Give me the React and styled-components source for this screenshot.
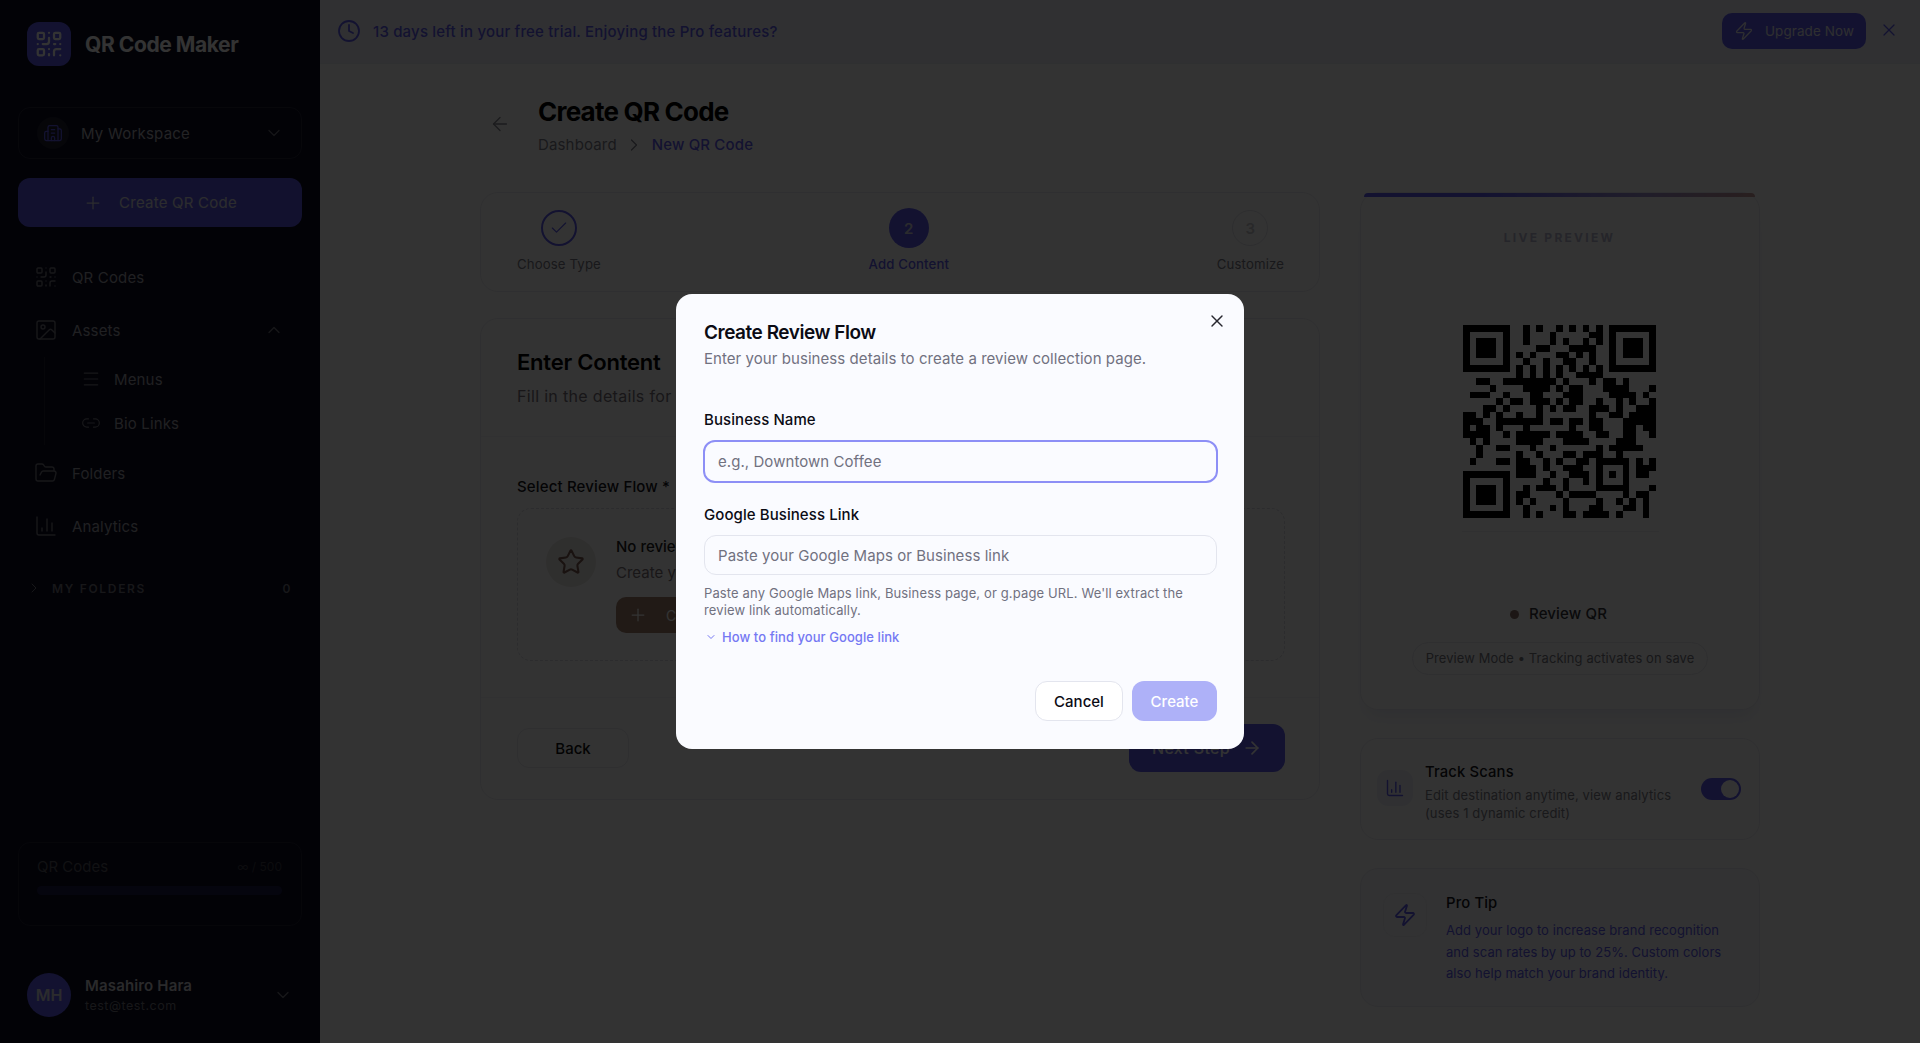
import React from "react";
import styled, { createGlobalStyle } from "styled-components";
import {
  ArrowLeft, ArrowRight, Building2, ChartColumn, Check, ChevronDown, ChevronRight, ChevronUp,
  Clock, FolderOpen, Image, Link2, Menu, Plus, QrCode, Star, X, Zap,
} from "lucide-react";

const primary = "#5f5cf1";

const GlobalStyle = createGlobalStyle`
  * { box-sizing: border-box; }
  html, body { margin: 0; height: 100%; overflow: hidden; }
  body { font-family: Inter, "Noto Sans", sans-serif; background: #ffffff; color: #0b0b14; }
`;

const Page = styled.div`
  display: flex;
  height: 100vh;
`;

/* sidebar */
const Sidebar = styled.aside`
  width: 320px;
  flex-shrink: 0;
  height: 100%;
  background: #0b0b20;
  display: flex;
  flex-direction: column;
  color: #b0b0b8;
`;

const Brand = styled.div`
  display: flex;
  align-items: center;
  gap: 14px;
  padding: 22px 27px 0;
  margin-bottom: 41px;
`;

const LogoBox = styled.div`
  width: 44px;
  height: 44px;
  border-radius: 12px;
  background: ${primary};
  color: #fff;
  display: flex;
  align-items: center;
  justify-content: center;
`;

const BrandName = styled.div`
  font-size: 21px;
  font-weight: 700;
  letter-spacing: -0.02em;
  color: #fff;
`;

const SideBlock = styled.div`
  margin: 0 18px;
`;

const Workspace = styled(SideBlock)`
  height: 52px;
  border: 1px solid rgba(255, 255, 255, 0.1);
  border-radius: 12px;
  display: flex;
  align-items: center;
  padding: 0 17px 0 18px;
  font-size: 15px;
  letter-spacing: 0.015em;
  > svg { color: #6a6a74; }
`;

const WorkspaceIcon = styled.div`
  width: 32px;
  height: 32px;
  border-radius: 50%;
  background: rgba(255, 255, 255, 0.08);
  color: ${primary};
  display: flex;
  align-items: center;
  justify-content: center;
  margin-right: 12px;
`;

const Grow = styled.span`
  flex: 1;
`;

const CreateButton = styled(SideBlock)`
  height: 49px;
  margin-top: 19px;
  margin-bottom: 28px;
  border-radius: 12px;
  background: ${primary};
  color: #e8e8f0;
  display: flex;
  align-items: center;
  justify-content: center;
  gap: 16px;
  font-size: 15px;
  letter-spacing: 0.015em;
  opacity: 0.95;
`;

const NavList = styled.nav`
  display: flex;
  flex-direction: column;
  gap: 9px;
  padding: 0 18px;
`;

const NavItem = styled.div`
  height: 44px;
  display: flex;
  align-items: center;
  gap: 14px;
  padding: 0 18px 0 16px;
  font-size: 15px;
  letter-spacing: 0.01em;
  color: #a0a0aa;
  > svg { color: #74747e; }
`;

const SubGroup = styled.div`
  margin: -4px 0 -3px 26px;
  padding-left: 36px;
  border-left: 1px solid rgba(255, 255, 255, 0.08);
`;

const SubItem = styled.div`
  height: 44px;
  display: flex;
  align-items: center;
  gap: 13px;
  font-size: 15px;
  letter-spacing: 0.01em;
  color: #a0a0aa;
  > svg { color: #74747e; }
`;

const FolderHead = styled.div`
  display: flex;
  align-items: center;
  margin-top: 32px;
  padding: 0 28px 0 26px;
  font-size: 12px;
  font-weight: 600;
  letter-spacing: 0.14em;
  color: #72727c;
  gap: 10px;
`;

const UsageBox = styled(SideBlock)`
  margin-top: auto;
  height: 84px;
  border: 1px solid rgba(255, 255, 255, 0.08);
  border-radius: 12px;
  padding: 14px 19px 14px 18px;
`;

const UsageRow = styled.div`
  display: flex;
  justify-content: space-between;
  font-size: 15px;
  line-height: 20px;
  color: #55555f;
`;

const UsageLimit = styled.span`
  font-size: 12px;
  color: #3c3c46;
`;

const UsageBar = styled.div`
  height: 9px;
  border-radius: 5px;
  margin-top: 9px;
  background: rgba(95, 92, 241, 0.2);
`;

const UserRow = styled.div`
  display: flex;
  align-items: center;
  gap: 14px;
  padding: 0 27px 0 27px;
  margin: 47px 0 26px;
  > svg { color: #74747e; }
`;

const Avatar = styled.div`
  width: 44px;
  height: 44px;
  border-radius: 50%;
  background: ${primary};
  color: #d8d8e2;
  font-size: 16px;
  font-weight: 600;
  display: flex;
  align-items: center;
  justify-content: center;
`;

const UserName = styled.div`
  font-size: 15px;
  font-weight: 600;
  letter-spacing: 0.01em;
  line-height: 20px;
  color: #cfcfd6;
`;

const UserMail = styled.div`
  font-size: 12.5px;
  letter-spacing: 0.04em;
  line-height: 19px;
  color: #74747e;
`;

/* main */
const Main = styled.main`
  flex: 1;
  min-width: 0;
  display: flex;
  flex-direction: column;
`;

const TrialBar = styled.div`
  height: 64px;
  padding: 0 21px 0 17px;
  display: flex;
  align-items: flex-start;
  background: #eef0fb;
  border-bottom: 1px solid #eceef6;
`;

const TrialText = styled.div`
  height: 62px;
  display: flex;
  align-items: center;
  gap: 12px;
  font-size: 15px;
  letter-spacing: 0.012em;
  font-weight: 500;
  color: ${primary};
  flex: 1;
`;

const UpgradeButton = styled.div`
  margin: 13px 13px 0 0;
  height: 36px;
  width: 144px;
  border-radius: 10px;
  background: ${primary};
  color: #e8e8f0;
  display: flex;
  align-items: center;
  justify-content: center;
  gap: 11px;
  font-size: 13.4px;
  font-weight: 400;
  letter-spacing: 0.01em;
`;

const TrialClose = styled.div`
  margin-top: 20px;
  color: ${primary};
  display: flex;
`;

const Content = styled.div`
  width: 1280px;
  margin: 0 auto;
  padding-top: 28px;
`;

const Header = styled.header`
  display: flex;
  align-items: center;
  gap: 27px;
  height: 64px;
  padding-left: 9px;
  margin-bottom: 36px;
  color: #666;
  > svg { color: #8a8a94; }
`;

const PageTitle = styled.h1`
  margin: 2px 0 0;
  font-size: 26px;
  line-height: 36px;
  font-weight: 700;
  letter-spacing: -0.03em;
  color: #000;
`;

const Crumbs = styled.div`
  display: flex;
  align-items: center;
  gap: 7px;
  font-size: 15px;
  letter-spacing: 0.01em;
  line-height: 22px;
  margin-top: 4px;
  color: #7f7f8a;
`;

const CrumbActive = styled.span`
  color: ${primary};
  font-weight: 500;
  margin-left: 1px;
`;

const Columns = styled.div`
  display: grid;
  grid-template-columns: 840px 400px;
  gap: 40px;
`;

const Stack = styled.div`
  display: flex;
  flex-direction: column;
  gap: ${(p) => p.$gap}px;
`;

const Card = styled.section`
  border: 1px solid #ececf2;
  border-radius: 18px;
  background: #fff;
`;

const StepperCard = styled(Card)`
  height: 100px;
  padding: 15px 35px 0 36px;
  display: flex;
  justify-content: space-between;
`;

const Step = styled.div`
  display: flex;
  flex-direction: column;
  align-items: center;
  font-size: 13.2px;
  letter-spacing: 0.01em;
  color: ${(p) => (p.$active ? primary : "#7a7a85")};
  font-weight: ${(p) => (p.$active ? 500 : 400)};
`;

const StepCircle = styled.div`
  width: ${(p) => (p.$active ? 40 : 36)}px;
  height: ${(p) => (p.$active ? 40 : 36)}px;
  margin: ${(p) => (p.$active ? 0 : 2)}px 0 ${(p) => (p.$active ? 8 : 10)}px;
  border-radius: 50%;
  border: ${(p) => (p.$done ? `2px solid ${primary}` : p.$active ? "none" : "1px solid #e2e2ea")};
  background: ${(p) => (p.$active ? primary : "transparent")};
  color: ${(p) => (p.$active ? "#d8d8e2" : p.$done ? primary : "#c8c8ce")};
  display: flex;
  align-items: center;
  justify-content: center;
  font-size: 15px;
  font-weight: 600;
`;

const ContentCard = styled(Card)`
  height: 482px;
  padding: 26px 34px 0 36px;
`;

const SectionTitle = styled.h2`
  margin: 0;
  font-size: 22px;
  line-height: 34px;
  font-weight: 600;
  letter-spacing: -0.01em;
  color: #000;
`;

const SectionSub = styled.p`
  margin: 2px 0 0;
  font-size: 16px;
  letter-spacing: 0.02em;
  line-height: 30px;
  color: #77707a;
`;

const Rule = styled.div`
  height: 1px;
  margin: ${(p) => p.$margin};
  background: #f3f3f7;
`;

const FieldLabel = styled.div`
  font-size: 15px;
  letter-spacing: 0.01em;
  line-height: 22px;
  font-weight: 500;
  color: #15151c;
`;

const EmptyBox = styled.div`
  height: 153px;
  margin-top: 10px;
  border: 1px dashed #dcdce4;
  border-radius: 14px;
  padding: 25px 0 0 28px;
  display: flex;
  gap: 20px;
`;

const StarCircle = styled.div`
  width: 50px;
  height: 50px;
  border-radius: 50%;
  background: #ece8e5;
  color: #7c5c50;
  margin-top: 3px;
  display: flex;
  align-items: center;
  justify-content: center;
`;

const EmptyBody = styled.div`
  margin-top: 2px;
`;

const EmptyTitle = styled.div`
  font-size: 15px;
  line-height: 22px;
  font-weight: 500;
  color: #222;
`;

const EmptyText = styled.div`
  font-size: 15px;
  line-height: 22px;
  margin-top: 4px;
  color: #7c7278;
`;

const AmberButton = styled.div`
  display: inline-flex;
  align-items: center;
  gap: 18px;
  height: 36px;
  margin-top: 13px;
  padding: 0 16px 0 12px;
  border-radius: 10px;
  background: #a5836f;
  color: #fff;
  font-size: 14px;
`;

const StepActions = styled.div`
  display: flex;
  justify-content: space-between;
  align-items: center;
  margin-top: 26px;
`;

const BackButton = styled.div`
  width: 112px;
  height: 40px;
  border: 1px solid #e8e8ee;
  border-radius: 12px;
  display: flex;
  align-items: center;
  justify-content: center;
  font-size: 15px;
  font-weight: 500;
  color: #111;
`;

const NextButton = styled.div`
  width: 156px;
  height: 48px;
  border-radius: 12px;
  background: ${primary};
  color: #fff;
  display: flex;
  align-items: center;
  justify-content: center;
  gap: 12px;
  font-size: 16px;
  letter-spacing: 0.02em;
  font-weight: 500;
`;

const PreviewCard = styled(Card)`
  position: relative;
  height: 518px;
  padding-top: 37px;
  display: flex;
  flex-direction: column;
  align-items: center;
  box-shadow: 0 12px 16px -6px rgba(100, 116, 180, 0.14);
  &::before {
    content: "";
    position: absolute;
    top: 0;
    left: 3px;
    right: 4px;
    height: 4px;
    border-radius: 18px 18px 0 0;
    background: linear-gradient(90deg, ${primary}, ${primary} 30%, #9c8fd0 70%, #c99a9a);
  }
`;

const PreviewLabel = styled.div`
  font-size: 12px;
  line-height: 16px;
  font-weight: 700;
  letter-spacing: 0.19em;
  margin-right: 1px;
  color: #b8b8d0;
`;

const QrSvg = styled.svg`
  display: block;
  width: 193px;
  height: 193px;
  margin: 79px 2px 0 0;
  shape-rendering: crispEdges;
`;

const QrRule = styled.div`
  width: 197px;
  height: 1px;
  margin-top: 13px;
  background: #f0f0f4;
`;

const StatusRow = styled.div`
  display: flex;
  align-items: center;
  gap: 10px;
  margin: 71px 3px 0 0;
  font-size: 15px;
  letter-spacing: 0.01em;
  line-height: 22px;
  font-weight: 500;
  color: #33333a;
`;

const StatusDot = styled.span`
  width: 9px;
  height: 9px;
  border-radius: 50%;
  background: #8a6f68;
`;

const ModePill = styled.div`
  height: 33px;
  margin-top: 17px;
  padding: 0 13px;
  border: 1px solid #e8e8ee;
  border-radius: 17px;
  display: flex;
  align-items: center;
  font-size: 12.9px;
  letter-spacing: 0.01em;
  color: #77777f;
`;

const TrackCard = styled(Card)`
  height: 102px;
  padding: 0 18px 0 16px;
  display: flex;
  align-items: center;
  gap: 12px;
`;

const TrackIcon = styled.div`
  width: 36px;
  height: 36px;
  margin-top: -3px;
  border-radius: 11px;
  background: #f0f1f9;
  color: ${primary};
  display: flex;
  align-items: center;
  justify-content: center;
`;

const CardTitle = styled.div`
  font-size: 14.8px;
  line-height: 20px;
  margin-bottom: ${(p) => p.$below || 0}px;
  font-weight: 500;
  letter-spacing: 0.01em;
  color: #15151c;
`;

const TrackText = styled.div`
  flex: 1;
  padding-top: 6px;
  font-size: 13px;
  line-height: 18px;
  letter-spacing: 0.01em;
  color: #7d7d87;
`;

const Toggle = styled.div`
  width: 40px;
  height: 22px;
  margin-top: -1px;
  border-radius: 11px;
  background: ${primary};
  padding: 2px;
  display: flex;
  justify-content: flex-end;
  &::after {
    content: "";
    width: 18px;
    height: 18px;
    border-radius: 50%;
    background: #fff;
  }
`;

const TipCard = styled(Card)`
  height: 139px;
  padding: 24px 24px 0 22px;
  display: flex;
  gap: 19px;
  background: #f7f8fd;
`;

const TipIcon = styled.div`
  width: 44px;
  height: 44px;
  border-radius: 12px;
  flex-shrink: 0;
  border: 1px solid #f0f0f6;
  background: #fafbff;
  color: ${primary};
  display: flex;
  align-items: center;
  justify-content: center;
`;

const TipText = styled.div`
  margin-top: 7px;
  font-size: 13px;
  line-height: 21.6px;
  letter-spacing: 0.005em;
  color: ${primary};
`;

/* dialog */
const Overlay = styled.div`
  position: fixed;
  inset: 0;
  background: rgba(0, 0, 0, 0.8);
  display: flex;
  align-items: center;
  justify-content: center;
`;

const Dialog = styled.div`
  position: relative;
  width: 568px;
  height: 455px;
  background: #fafbff;
  border-radius: 16px;
  padding: 27px 27px 0 28px;
  display: flex;
  flex-direction: column;
`;

const DialogClose = styled.div`
  position: absolute;
  top: 17px;
  right: 17px;
  color: #27272f;
  display: flex;
`;

const DialogTitle = styled.h2`
  margin: 0;
  font-size: 19px;
  line-height: 24px;
  font-weight: 600;
  letter-spacing: -0.025em;
  color: #0b0b14;
`;

const DialogSub = styled.p`
  margin: 4px 0 0;
  font-size: 15px;
  letter-spacing: 0.004em;
  line-height: 20px;
  color: #71717f;
`;

const DialogLabel = styled.label`
  display: block;
  margin: ${(p) => p.$top}px 0 10px;
  font-size: 15px;
  letter-spacing: 0.005em;
  line-height: 20px;
  font-weight: 500;
  color: #0b0b14;
`;

const TextInput = styled.input`
  display: block;
  height: ${(p) => (p.$focused ? 43 : 40)}px;
  margin: ${(p) => (p.$focused ? "0 -1px" : 0)};
  width: ${(p) => (p.$focused ? "calc(100% + 2px)" : "100%")};
  padding: 0 13px;
  border: ${(p) => (p.$focused ? "2px solid #8d8ff6" : "1px solid #e3e5ee")};
  border-radius: 12px;
  background: #fafbff;
  outline: none;
  font: 400 15px Inter, sans-serif;
  letter-spacing: 0.004em;
  &::placeholder {
    color: #71717f;
    opacity: 1;
  }
`;

const HelpText = styled.p`
  margin: 10px 0 0;
  font-size: 13px;
  letter-spacing: 0.01em;
  line-height: 17px;
  color: #71717f;
`;

const HelpLink = styled.div`
  display: flex;
  align-items: center;
  gap: 5px;
  margin-top: 9px;
  padding-left: 1px;
  font-size: 13px;
  letter-spacing: 0.005em;
  line-height: 18px;
  font-weight: 500;
  color: #7578f3;
`;

const DialogActions = styled.div`
  display: flex;
  justify-content: flex-end;
  gap: 9px;
  margin-top: 35px;
`;

const CancelButton = styled.button`
  width: 88px;
  height: 40px;
  border: 1px solid #e3e5ee;
  border-radius: 12px;
  background: #fff;
  font: 500 15px Inter, sans-serif;
  color: #0b0b14;
`;

const SubmitButton = styled.button`
  width: 85px;
  height: 40px;
  border: none;
  border-radius: 12px;
  background: #aeb1f8;
  font: 500 15px Inter, sans-serif;
  color: #fff;
`;

const qrRows = [
  "9 11 14 16 18 20",
  "9 13 19-20",
  "9 13 15 18 20",
  "11-12 16-19",
  "8 10 14-15 17 19",
  "9 12 15-16 19",
  "8 10 12 14 16 18 20",
  "8 10 12 14 17-20",
  "2-3 6-13 15 19 21-22 24",
  "4 9-12 14 16-17 21-24 28",
  "1-3 6 10-11 15-17 22-25 27",
  "5 7-8 10-12 14 16-17 20 23 25 28",
  "3-4 6 11 13 15-16 19-21 23 26-28",
  "0-1 3 5 8 11 19 22-23 25-28",
  "0-2 5-11 13-14 16-17 19-20 24-28",
  "0 2-3 5 9 16 19-20 24-25 27-28",
  "0-3 6 8-12 14-17 20-21 24-25 28",
  "1 3 8-11 15-18 23-25",
  "2 5-6 10 13 20 22-26",
  "2 8 11 15-16 18-20 23",
  "1 5-6 8-9 12 14 17-18 20-24 26 28",
  "8-10 12 15-17 20 24 26-28",
  "8-10 13 16-18 20 22 24 26-27",
  "12 15 18 20 24",
  "9 11-13 15 20-24 28",
  "8-9 14 16-19 24 26-27",
  "8 10 15 20 23 25 27",
  "9 13 15 19-20 24-25 27",
  "9 11 15-16 18-21 23 27",
];

const parseRow = (row) =>
  row.split(" ").map((part) => {
    const [from, to] = part.split("-").map(Number);
    return [from, (to ?? from) - from + 1];
  });

const Finder = ({ x, y }) => (
  <>
    <path d={`M${x} ${y}h7v7h-7zM${x + 1} ${y + 1}v5h5v-5z`} fillRule="evenodd" />
    <rect x={x + 2} y={y + 2} width="3" height="3" />
  </>
);

const QrPicture = () => (
  <QrSvg viewBox="0 0 29 29" fill="#000">
    <Finder x={0} y={0} />
    <Finder x={22} y={0} />
    <Finder x={0} y={22} />
    {qrRows.map((row, y) =>
      parseRow(row).map(([x, w]) => <rect key={`${y}-${x}`} x={x} y={y} width={w} height="1" />)
    )}
  </QrSvg>
);

const App = () => (
  <>
    <GlobalStyle />
    <Page>
      <Sidebar>
        <Brand>
          <LogoBox><QrCode size={30} strokeWidth={1.8} /></LogoBox>
          <BrandName>QR Code Maker</BrandName>
        </Brand>
        <Workspace>
          <WorkspaceIcon><Building2 size={20} strokeWidth={1.5} /></WorkspaceIcon>
          <Grow>My Workspace</Grow>
          <ChevronDown size={20} strokeWidth={1.5} />
        </Workspace>
        <CreateButton>
          <Plus size={20} strokeWidth={1.5} />
          Create QR Code
        </CreateButton>
        <NavList>
          <NavItem><QrCode size={24} strokeWidth={1.4} />QR Codes</NavItem>
          <NavItem><Image size={24} strokeWidth={1.4} /><Grow>Assets</Grow><ChevronUp size={20} strokeWidth={1.5} /></NavItem>
          <SubGroup>
            <SubItem><Menu size={20} strokeWidth={1.4} />Menus</SubItem>
            <SubItem><Link2 size={20} strokeWidth={1.4} />Bio Links</SubItem>
          </SubGroup>
          <NavItem><FolderOpen size={24} strokeWidth={1.4} />Folders</NavItem>
          <NavItem><ChartColumn size={24} strokeWidth={1.4} />Analytics</NavItem>
        </NavList>
        <FolderHead>
          <ChevronRight size={16} strokeWidth={1.5} />
          <Grow>MY FOLDERS</Grow>
          <span>0</span>
        </FolderHead>
        <UsageBox>
          <UsageRow><span>QR Codes</span><UsageLimit>∞ / 500</UsageLimit></UsageRow>
          <UsageBar />
        </UsageBox>
        <UserRow>
          <Avatar>MH</Avatar>
          <Grow>
            <UserName>Masahiro Hara</UserName>
            <UserMail>test@test.com</UserMail>
          </Grow>
          <ChevronDown size={20} strokeWidth={1.5} />
        </UserRow>
      </Sidebar>
      <Main>
        <TrialBar>
          <TrialText>
            <Clock size={24} strokeWidth={1.8} />
            13 days left in your free trial. Enjoying the Pro features?
          </TrialText>
          <UpgradeButton><Zap size={20} strokeWidth={1.5} />Upgrade Now</UpgradeButton>
          <TrialClose><X size={20} strokeWidth={1.5} /></TrialClose>
        </TrialBar>
        <Content>
          <Header>
            <ArrowLeft size={22} strokeWidth={1.5} />
            <div>
              <PageTitle>Create QR Code</PageTitle>
              <Crumbs>
                Dashboard
                <ChevronRight size={20} strokeWidth={1.5} />
                <CrumbActive>New QR Code</CrumbActive>
              </Crumbs>
            </div>
          </Header>
          <Columns>
            <Stack $gap={26}>
              <StepperCard>
                <Step>
                  <StepCircle $done><Check size={20} strokeWidth={1.4} /></StepCircle>
                  Choose Type
                </Step>
                <Step $active>
                  <StepCircle $active>2</StepCircle>
                  Add Content
                </Step>
                <Step>
                  <StepCircle>3</StepCircle>
                  Customize
                </Step>
              </StepperCard>
              <ContentCard>
                <SectionTitle>Enter Content</SectionTitle>
                <SectionSub>Fill in the details for your review QR code</SectionSub>
                <Rule $margin="25px -34px 39px -36px" />
                <FieldLabel>Select Review Flow *</FieldLabel>
                <EmptyBox>
                  <StarCircle><Star size={28} strokeWidth={1.8} /></StarCircle>
                  <EmptyBody>
                    <EmptyTitle>No review flows yet</EmptyTitle>
                    <EmptyText>Create your first review flow to get started</EmptyText>
                    <AmberButton><Plus size={20} strokeWidth={1.5} />Create Review Flow</AmberButton>
                  </EmptyBody>
                </EmptyBox>
                <Rule $margin="36px -34px 0 -36px" />
                <StepActions>
                  <BackButton>Back</BackButton>
                  <NextButton>Next Step<ArrowRight size={20} /></NextButton>
                </StepActions>
              </ContentCard>
            </Stack>
            <Stack $gap={28}>
              <PreviewCard>
                <PreviewLabel>LIVE PREVIEW</PreviewLabel>
                <QrPicture />
                <QrRule />
                <StatusRow><StatusDot />Review QR</StatusRow>
                <ModePill>Preview Mode • Tracking activates on save</ModePill>
              </PreviewCard>
              <TrackCard>
                <TrackIcon><ChartColumn size={20} strokeWidth={1.7} /></TrackIcon>
                <TrackText>
                  <CardTitle $below={4}>Track Scans</CardTitle>
                  Edit destination anytime, view analytics
                  <br />
                  (uses 1 dynamic credit)
                </TrackText>
                <Toggle />
              </TrackCard>
              <TipCard>
                <TipIcon><Zap size={24} strokeWidth={1.8} /></TipIcon>
                <div>
                  <CardTitle>Pro Tip</CardTitle>
                  <TipText>
                    Add your logo to increase brand recognition
                    <br />
                    and scan rates by up to 25%. Custom colors
                    <br />
                    also help match your brand identity.
                  </TipText>
                </div>
              </TipCard>
            </Stack>
          </Columns>
        </Content>
      </Main>
    </Page>
    <Overlay>
      <Dialog>
        <DialogClose><X size={20} strokeWidth={1.7} /></DialogClose>
        <DialogTitle>Create Review Flow</DialogTitle>
        <DialogSub>Enter your business details to create a review collection page.</DialogSub>
        <DialogLabel $top={41}>Business Name</DialogLabel>
        <TextInput $focused placeholder="e.g., Downtown Coffee" />
        <DialogLabel $top={22}>Google Business Link</DialogLabel>
        <TextInput placeholder="Paste your Google Maps or Business link" />
        <HelpText>
          Paste any Google Maps link, Business page, or g.page URL. We'll extract the
          <br />
          review link automatically.
        </HelpText>
        <HelpLink><ChevronDown size={12} />How to find your Google link</HelpLink>
        <DialogActions>
          <CancelButton>Cancel</CancelButton>
          <SubmitButton>Create</SubmitButton>
        </DialogActions>
      </Dialog>
    </Overlay>
  </>
);

export default App;
